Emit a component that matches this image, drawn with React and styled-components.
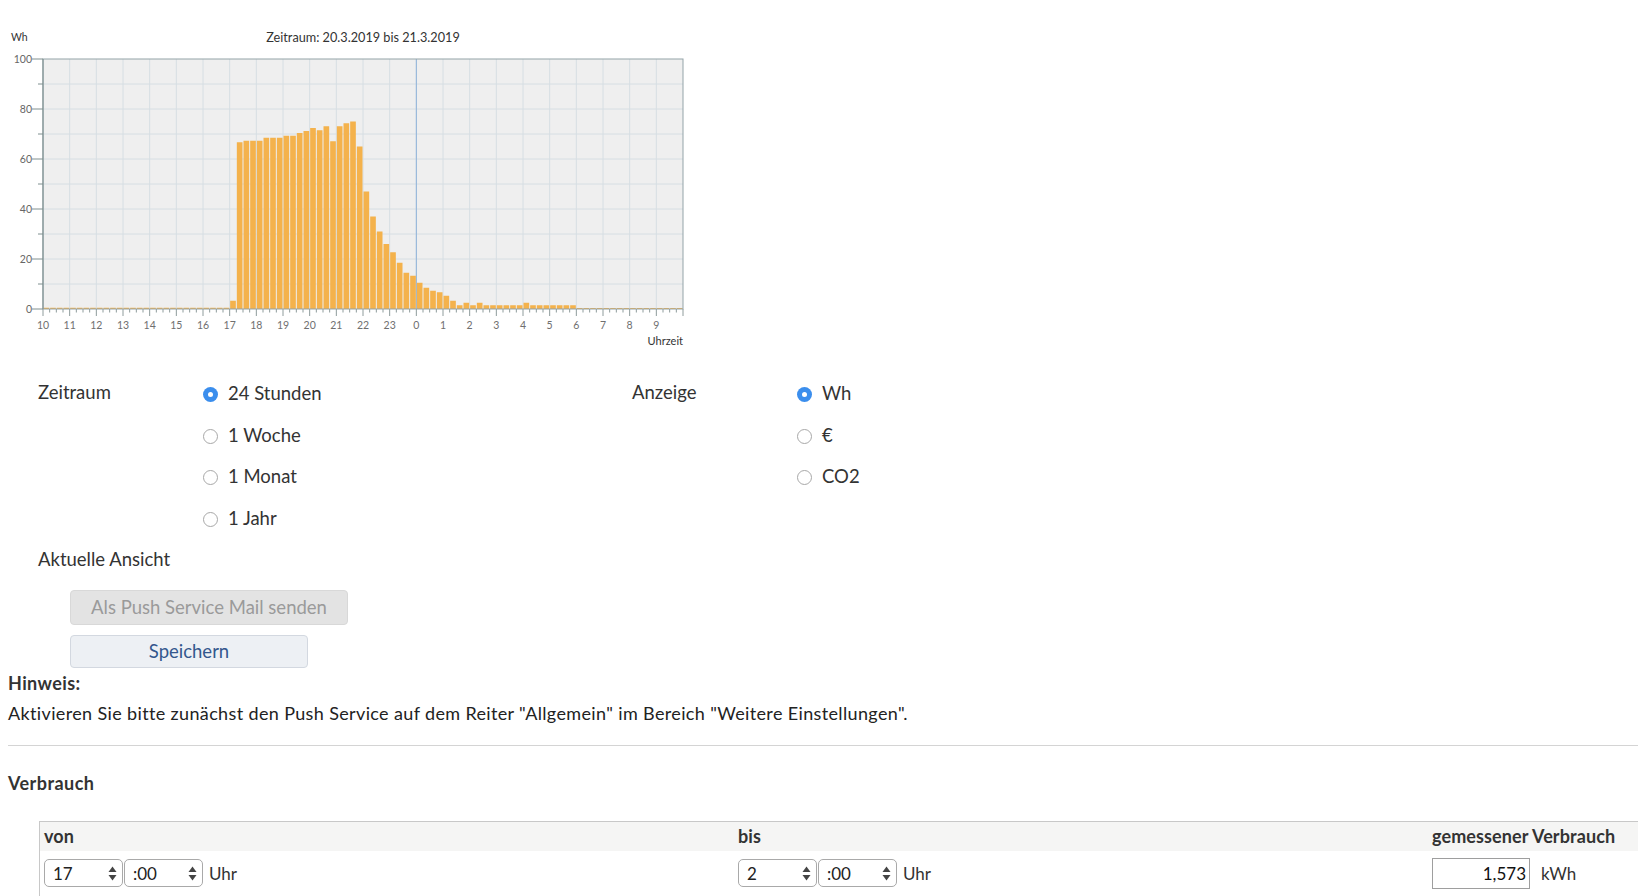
import React from 'react';
import styled, { createGlobalStyle } from 'styled-components';

const GlobalStyle = createGlobalStyle`
  html, body {
    margin: 0;
    padding: 0;
    background: #fff;
  }
  body {
    font-family: Lato, "Liberation Sans", sans-serif;
    color: #333;
    overflow: hidden;
  }
`;

const Page = styled.div`
  padding-left: 8px;
  width: 1630px;
`;

const ChartSvg = styled.svg`
  display: block;
  font-family: Lato, "Liberation Sans", sans-serif;
`;

const OptionsGrid = styled.div`
  display: grid;
  grid-template-columns: 164px 430px 164px auto;
  margin: 22px 0 0 30px;
`;

const FieldLabel = styled.div`
  height: 41.8px;
  line-height: 41.8px;
  font-size: 18.5px;
  color: #333;
  margin-left: ${p => p.$indent || 0}px;
`;

const RadioList = styled.div`
  display: flex;
  flex-direction: column;
`;

const RadioItem = styled.label`
  display: flex;
  align-items: center;
  gap: 10px;
  height: 41.8px;
  font-size: 18.5px;
  color: #333;
`;

const RadioCircle = styled.span`
  box-sizing: border-box;
  width: 15px;
  height: 15px;
  border-radius: 50%;
  margin: 3px 0 0 1px;
  border: ${p => (p.$checked ? '0' : '1px solid #a8a8a8')};
  background: ${p => (p.$checked ? '#3b8eed' : '#fff')};
  display: flex;
  align-items: center;
  justify-content: center;
  &::after {
    content: '';
    display: ${p => (p.$checked ? 'block' : 'none')};
    width: 5px;
    height: 5px;
    border-radius: 50%;
    background: #fff;
  }
`;

const ButtonStack = styled.div`
  display: flex;
  flex-direction: column;
  align-items: flex-start;
  gap: 10px;
  margin: 9px 0 0 62px;
`;

const Button = styled.button`
  box-sizing: border-box;
  width: ${p => p.$width}px;
  height: ${p => p.$height}px;
  font-family: Lato, "Liberation Sans", sans-serif;
  font-size: 18.5px;
  border-radius: 4px;
  padding: 0;
  border: 1px solid ${p => (p.disabled ? '#d8d8d8' : '#d3d8e0')};
  background: ${p => (p.disabled ? '#e3e3e3' : '#edf0f4')};
  color: ${p => (p.disabled ? '#9a9a9a' : '#33578d')};
`;

const NoteTitle = styled.div`
  font-size: 18px;
  font-weight: bold;
  letter-spacing: 0.4px;
  line-height: 30px;
  color: #333;
`;

const NoteText = styled.div`
  font-size: 18px;
  letter-spacing: 0.36px;
  line-height: 30px;
  color: #222;
`;

const Divider = styled.hr`
  border: 0;
  border-top: 1px solid #d4d4d4;
  margin: 17px 0 0;
`;

const SectionTitle = styled.div`
  font-size: 18px;
  font-weight: bold;
  letter-spacing: 0.45px;
  line-height: 30px;
  margin-top: 22px;
  color: #333;
`;

const Table = styled.div`
  display: grid;
  grid-template-columns: 694px 694px 1fr;
  margin: 23px 0 0 31px;
  border-top: 1px solid #c8c8c8;
  border-left: 1px solid #c8c8c8;
`;

const HeadCell = styled.div`
  background: #f5f5f4;
  height: 29px;
  line-height: 29px;
  padding-left: 4px;
  font-size: 18px;
  letter-spacing: 0.1px;
  font-weight: bold;
  color: #333;
  white-space: nowrap;
`;

const Cell = styled.div`
  display: flex;
  align-items: center;
  padding: 7px 4px 12px;
  font-size: 17px;
  color: #333;
`;

const SelectBox = styled.div`
  box-sizing: border-box;
  width: 79px;
  height: 28px;
  border: 1px solid #a9a9a9;
  border-radius: 5px;
  margin-right: 1px;
  padding: 0 5px 0 8px;
  display: flex;
  align-items: center;
  justify-content: space-between;
  font-size: 17px;
  color: #222;
  background: #fff;
`;

const UnitText = styled.span`
  margin-left: ${p => p.$gap}px;
  font-size: 17px;
  color: #333;
`;

const ValueInput = styled.div`
  box-sizing: border-box;
  width: 98px;
  height: 31px;
  border: 1px solid #9e9e9e;
  text-align: right;
  padding-right: 3px;
  line-height: 29px;
  font-size: 17px;
  color: #111;
`;

const values = [
  ...Array(28).fill(0.5),
  3.3, 66.7, 67.3, 67.3, 67.3, 68.5, 68.5, 68.5, 69.3, 69.3, 70.4, 71.2,
  72.4, 71.5, 73.1, 67.1, 73.1, 74.3, 75, 65, 47, 37, 31, 26,
  22.7, 18.5, 14.5, 13.3, 10.5, 8.5, 7.3, 6.7, 5.3, 3.3, 1.5, 2.5,
  1.5, 2.5, 1.5, 1.5, 1.5, 1.5, 1.5, 1.5, 2.5,
  ...Array(7).fill(1.5),
  ...Array(16).fill(0.4),
];

const hours = [10, 11, 12, 13, 14, 15, 16, 17, 18, 19, 20, 21, 22, 23, 0, 1, 2, 3, 4, 5, 6, 7, 8, 9];

function Chart() {
  const x0 = 35;
  const x1 = 675;
  const yTop = 59;
  const yBot = 309;
  const hourW = (x1 - x0) / 24;
  const barW = hourW / 4;
  const yOf = v => yBot - v * 2.5;

  return (
    <ChartSvg width="700" height="350">
      <text x="3" y="41" fontSize="10.5" fill="#333">Wh</text>
      <text x="355" y="42" fontSize="12.7" fill="#333" textAnchor="middle">
        Zeitraum: 20.3.2019 bis 21.3.2019
      </text>

      <rect x={x0} y={yTop} width={x1 - x0} height={yBot - yTop} fill="#efefef" />

      {hours.map((h, i) => (
        <line key={'gv' + i} x1={x0 + i * hourW} x2={x0 + i * hourW} y1={yTop} y2={yBot} stroke="#d6dee3" />
      ))}
      {[10, 20, 30, 40, 50, 60, 70, 80, 90].map(v => (
        <line key={'gh' + v} x1={x0} x2={x1} y1={yOf(v)} y2={yOf(v)} stroke="#d6dee3" />
      ))}
      <line x1={x0 + 14 * hourW} x2={x0 + 14 * hourW} y1={yTop} y2={yBot} stroke="#8fb3d9" />

      {values.map((v, i) => (
        <rect
          key={'b' + i}
          x={x0 + i * barW + 0.5}
          y={yOf(v)}
          width={barW - 1}
          height={v * 2.5}
          fill="#f4b24c"
        />
      ))}

      <rect x={x0} y={yTop} width={x1 - x0} height={yBot - yTop} fill="none" stroke="#93a3a8" />
      <line x1={x0} x2={x0} y1={yTop} y2={yBot} stroke="#7f8f8f" />

      {[0, 10, 20, 30, 40, 50, 60, 70, 80, 90, 100].map(v => (
        <line
          key={'yt' + v}
          x1={v % 20 === 0 ? x0 - 11 : x0 - 5}
          x2={x0}
          y1={yOf(v)}
          y2={yOf(v)}
          stroke="#7f8f8f"
        />
      ))}
      {[0, 20, 40, 60, 80, 100].map(v => (
        <text key={'yl' + v} x={x0 - 11} y={yOf(v) + 3.5} fontSize="10.5" fill="#666" textAnchor="end">
          {v}
        </text>
      ))}

      {Array.from({ length: 97 }, (_, i) => (
        <line
          key={'xt' + i}
          x1={x0 + i * barW}
          x2={x0 + i * barW}
          y1={yBot}
          y2={i % 4 === 0 ? yBot + 7 : yBot + 3.5}
          stroke="#8f9c9c"
        />
      ))}
      {hours.map((h, i) => (
        <text key={'xl' + i} x={x0 + i * hourW} y="329" fontSize="10.5" fill="#6f6f6f" textAnchor="middle">
          {h}
        </text>
      ))}
      <text x={x1} y="345" fontSize="11" fill="#333" textAnchor="end">Uhrzeit</text>
    </ChartSvg>
  );
}

function Radio({ checked, children }) {
  return (
    <RadioItem>
      <RadioCircle $checked={checked} />
      {children}
    </RadioItem>
  );
}

function SpinArrows() {
  return (
    <svg width="9" height="15" viewBox="0 0 9 15">
      <path d="M4.5 0.5 L8.5 6 L0.5 6 Z" fill="#444" />
      <path d="M4.5 14.5 L8.5 9 L0.5 9 Z" fill="#444" />
    </svg>
  );
}

function TimeSelect({ hour }) {
  return (
    <>
      <SelectBox>
        <span>{hour}</span>
        <SpinArrows />
      </SelectBox>
      <SelectBox>
        <span>:00</span>
        <SpinArrows />
      </SelectBox>
      <UnitText $gap={5}>Uhr</UnitText>
    </>
  );
}

export default function App() {
  return (
    <Page>
      <GlobalStyle />
      <Chart />

      <OptionsGrid>
        <FieldLabel>Zeitraum</FieldLabel>
        <RadioList>
          <Radio checked>24 Stunden</Radio>
          <Radio>1 Woche</Radio>
          <Radio>1 Monat</Radio>
          <Radio>1 Jahr</Radio>
        </RadioList>
        <FieldLabel>Anzeige</FieldLabel>
        <RadioList>
          <Radio checked>Wh</Radio>
          <Radio>€</Radio>
          <Radio>CO2</Radio>
        </RadioList>
      </OptionsGrid>
      <FieldLabel $indent={30}>Aktuelle Ansicht</FieldLabel>

      <ButtonStack>
        <Button disabled $width={278} $height={35}>Als Push Service Mail senden</Button>
        <Button $width={238} $height={33}>Speichern</Button>
      </ButtonStack>

      <NoteTitle>Hinweis:</NoteTitle>
      <NoteText>
        Aktivieren Sie bitte zunächst den Push Service auf dem Reiter "Allgemein" im Bereich "Weitere Einstellungen".
      </NoteText>

      <Divider />
      <SectionTitle>Verbrauch</SectionTitle>

      <Table>
        <HeadCell>von</HeadCell>
        <HeadCell>bis</HeadCell>
        <HeadCell>gemessener Verbrauch</HeadCell>
        <Cell>
          <TimeSelect hour="17" />
        </Cell>
        <Cell>
          <TimeSelect hour="2" />
        </Cell>
        <Cell>
          <ValueInput>1,573</ValueInput>
          <UnitText $gap={11}>kWh</UnitText>
        </Cell>
      </Table>
    </Page>
  );
}
